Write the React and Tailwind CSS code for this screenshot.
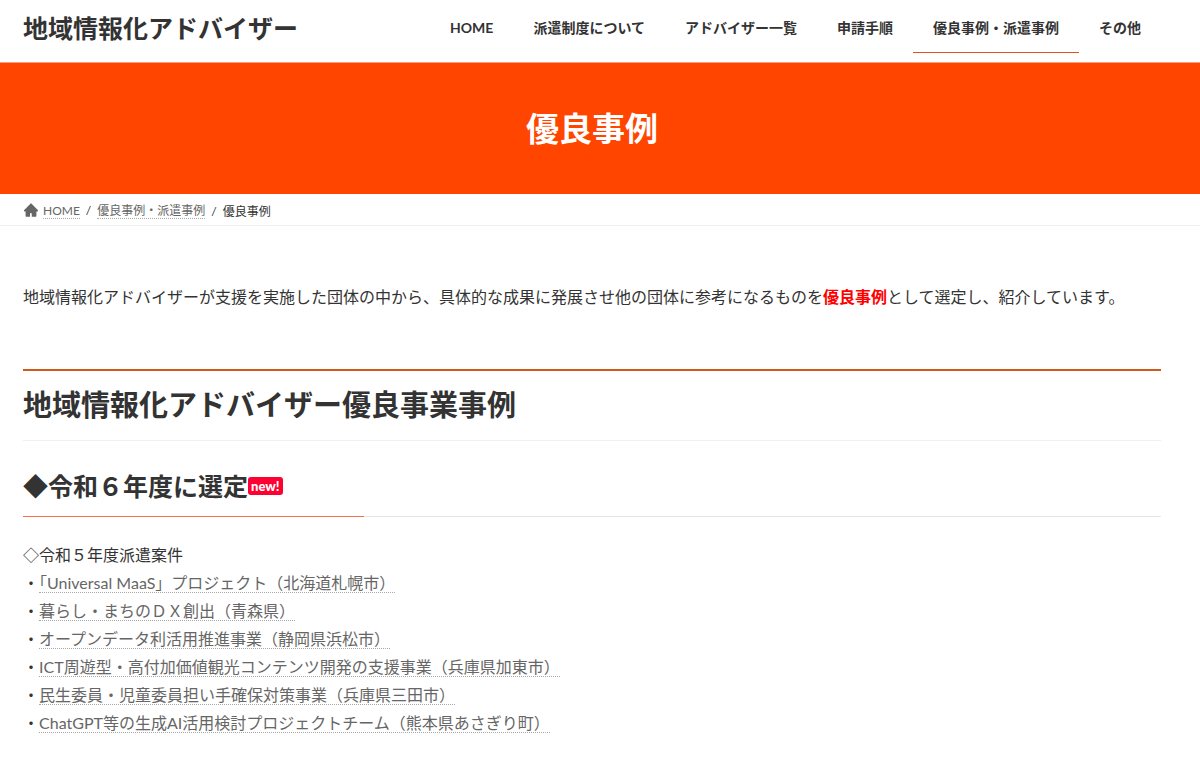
import { AiFillHome } from 'react-icons/ai';

const NAV_ITEMS = [
  { label: 'HOME' },
  { label: '派遣制度について' },
  { label: 'アドバイザー一覧' },
  { label: '申請手順' },
  { label: '優良事例・派遣事例', active: true },
  { label: 'その他' },
];

const CASES = [
  '「Universal MaaS」プロジェクト（北海道札幌市）',
  '暮らし・まちのＤＸ創出（青森県）',
  'オープンデータ利活用推進事業（静岡県浜松市）',
  'ICT周遊型・高付加価値観光コンテンツ開発の支援事業（兵庫県加東市）',
  '民生委員・児童委員担い手確保対策事業（兵庫県三田市）',
  'ChatGPT等の生成AI活用検討プロジェクトチーム（熊本県あさぎり町）',
];

function Container({ className = '', children }) {
  return (
    <div className="pr-4">
      <div className={`mx-auto max-w-[1138px] ${className}`}>{children}</div>
    </div>
  );
}

function Header() {
  return (
    <header className="border-b border-[#f3a27c]">
      <Container className="flex h-[62px] items-start justify-between">
        <a href="#" className="pt-2 text-[25px] leading-[40px] font-bold">地域情報化アドバイザー</a>
        <nav>
          <ul className="flex text-[14px] leading-[20px] font-bold">
            {NAV_ITEMS.map((item) => (
              <li key={item.label}>
                <a
                  href="#"
                  className={`block border-b px-5 pt-[18px] pb-[14px] ${item.active ? 'border-[#d9531e]' : 'border-transparent'}`}
                >
                  {item.label}
                </a>
              </li>
            ))}
          </ul>
        </nav>
      </Container>
    </header>
  );
}

function Breadcrumb() {
  const link = 'border-b border-dotted border-[#aaa] pt-1 text-[#666]';
  return (
    <nav aria-label="パンくずリスト" className="border-b border-[#f0f0f0]">
      <Container>
        <ol className="flex h-[31px] items-center text-[12px] leading-[14px]">
          <li className="flex items-center gap-1">
            <AiFillHome className="size-4 text-[#666]" />
            <a href="#" className={link}>HOME</a>
          </li>
          <li className="flex">
            <span className="px-[6px] pt-1">/</span>
            <a href="#" className={link}>優良事例・派遣事例</a>
          </li>
          <li className="flex">
            <span className="px-[6px] pt-1">/</span>
            <span className="pt-1">優良事例</span>
          </li>
        </ol>
      </Container>
    </nav>
  );
}

export default function App() {
  return (
    <div className="bg-white font-['Lato','Noto_Sans_CJK_JP',sans-serif] text-[16px] leading-[28px] text-[#333]" lang="ja">
      <Header />

      <div className="bg-[#ff4500] text-white">
        <Container className="py-[41px] text-center">
          <h1 className="text-[33px] leading-[49px] font-bold">優良事例</h1>
        </Container>
      </div>

      <Breadcrumb />

      <main>
        <Container className="pt-[57px] pb-6">
          <p>
            地域情報化アドバイザーが支援を実施した団体の中から、具体的な成果に発展させ他の団体に参考になるものを
            <strong className="font-bold text-[#f00]">優良事例</strong>
            として選定し、紹介しています。
          </p>

          <h2 className="mt-[58px] border-t-2 border-b border-t-[#cf5a1c] border-b-[#f0f0f0] pt-[14px] pb-[15px] text-[29px] leading-[40px] font-bold">
            地域情報化アドバイザー優良事業事例
          </h2>

          <h3 className="mt-[25px] flex items-center pb-[10px] text-[25px] leading-[40px] font-bold">
            ◆令和６年度に選定
            <span className="rounded-[3px] bg-[#ff0033] px-[3px] text-[13px] leading-[18px] font-black text-white">new!</span>
          </h3>
          <div className="h-px bg-[#e5e5e5]">
            <div className="h-px w-[30%] bg-[#f5714a]" />
          </div>

          <p className="mt-6">◇令和５年度派遣案件</p>
          <ul>
            {CASES.map((name) => (
              <li key={name}>
                ・<a href="#" className="border-b border-dotted border-[#aaa] text-[#666]">{name}</a>
              </li>
            ))}
          </ul>
        </Container>
      </main>
    </div>
  );
}
